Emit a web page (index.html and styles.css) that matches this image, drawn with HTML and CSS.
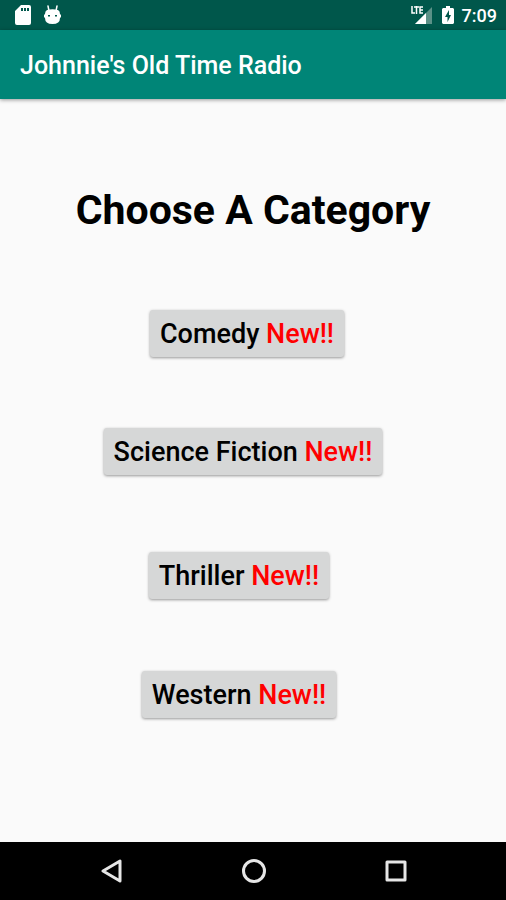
FILE: index.html
```html
<!DOCTYPE html>
<html lang="en">
<head>
<meta charset="utf-8">
<meta name="viewport" content="width=device-width, initial-scale=1">
<title>Johnnie's Old Time Radio</title>
<link rel="stylesheet" href="styles.css">
</head>
<body>
<div class="status">
  <svg class="sd" width="16" height="20" viewBox="0 0 16 20" aria-hidden="true"><path fill="#fff" fill-rule="evenodd" d="M6 0h8a2 2 0 0 1 2 2v16a2 2 0 0 1-2 2H2a2 2 0 0 1-2-2V6zM6 3v3h2V3zm3 0v3h2V3zm3 0v3h2V3z"/></svg>
  <svg class="droid" width="17" height="20" viewBox="0 0 17 20" aria-hidden="true"><path d="M4 1l1 5M13 1l-1 5" fill="none" stroke="#fff" stroke-width="1.500" stroke-linecap="round"/><path fill="#fff" fill-rule="evenodd" d="M3 5q5.500-1.500 11 0 2 1 2 4l1 1v2l-1 1q0 6-7.500 6T1 13l-1-1v-2l1-1q0-3 2-4zM4 10v1.500h2V10zm7 0v1.500h2V10z"/></svg>
  <span class="spacer"></span>
  <svg class="signal" width="22" height="20" viewBox="0 0 22 20" aria-hidden="true"><path fill="#5b9187" d="M21 2v17H4z"/><path fill="#fff" d="M15 8v11H4z"/><path d="M1 1v7h3M3 2h5M5.500 1v8M12 2H9v6h3M9 5h3" fill="none" stroke="#fff" stroke-width="1.500"/></svg>
  <svg class="battery" width="12" height="18" viewBox="0 0 12 18" aria-hidden="true"><path fill="#fff" fill-rule="evenodd" d="M4 0h4v2h3l1 1v14l-1 1H1l-1-1V3l1-1h3zM7 4l-4 7h2.500v5L9 9H7z"/></svg>
  <time class="clock">7:09</time>
</div>
<header class="appbar"><span class="title">Johnnie's Old Time Radio</span></header>
<main class="content">
  <h1 class="heading">Choose A Category</h1>
  <button class="category comedy" type="button">Comedy <span class="new">New!!</span></button>
  <button class="category scifi" type="button">Science Fiction <span class="new">New!!</span></button>
  <button class="category thriller" type="button">Thriller <span class="new">New!!</span></button>
  <button class="category western" type="button">Western <span class="new">New!!</span></button>
</main>
<nav class="navbar" aria-label="System navigation">
  <button class="key" type="button" aria-label="Back"><svg width="24" height="24" viewBox="0 0 24 24"><path d="M20 2v20L3 12z"/></svg></button>
  <button class="key" type="button" aria-label="Home"><svg width="26" height="26" viewBox="0 0 26 26"><circle cx="13" cy="13" r="10.500"/></svg></button>
  <button class="key" type="button" aria-label="Recent apps"><svg width="24" height="24" viewBox="0 0 24 24"><rect x="3" y="3" width="18" height="18"/></svg></button>
</nav>
</body>
</html>
```

FILE: styles.css
```css
* { box-sizing: border-box; }
body {
  margin: 0;
  min-height: 100vh;
  display: flex;
  flex-direction: column;
  background: #fafafa;
  color: #000;
  font-family: Roboto, "Liberation Sans", sans-serif;
}
.status {
  display: flex;
  align-items: center;
  height: 30px;
  padding: 0 9px 0 15px;
  background: #00574b;
  color: #fff;
}
.droid { margin-left: 13px; }
.spacer { flex: 1; }
.battery { margin: 0 8px 0 9px; }
.clock { padding-top: 2px; font-size: 18px; font-weight: 500; line-height: 30px; }
.appbar {
  display: flex;
  align-items: center;
  height: 69px;
  padding: 2px 20px 0;
  background: #008577;
  box-shadow: 0 1px 4px rgba(0, 0, 0, 0.4);
}
.title { color: #fff; font-size: 25px; font-weight: 500; }
.content {
  flex: 1;
  display: flex;
  flex-direction: column;
  align-items: center;
  padding-top: 86px;
}
.heading { margin: 0 0 75px; font-size: 41px; line-height: 50px; font-weight: 700; }
.category {
  height: 47px;
  padding: 2px 10px 0;
  border: 0;
  border-radius: 3px;
  background: #d6d7d7;
  box-shadow: 0 1px 3px rgba(0, 0, 0, 0.4);
  color: #000;
  font: 500 27px/45px Roboto, "Liberation Sans", sans-serif;
}
.new { color: #f00; }
.comedy { margin: 0 12px 71px 0; }
.scifi { margin: 0 20px 77px 0; }
.thriller { margin: 0 28px 72px 0; }
.western { margin: 0 28px 24px 0; }
.navbar {
  display: grid;
  grid-template-columns: repeat(3, 142px);
  justify-content: center;
  height: 58px;
  padding-left: 2px;
  background: #000;
}
.key { display: grid; place-items: center; padding: 0; border: 0; background: none; }
.key svg { fill: none; stroke: #e6e6e6; stroke-width: 3; stroke-linejoin: round; }
```
